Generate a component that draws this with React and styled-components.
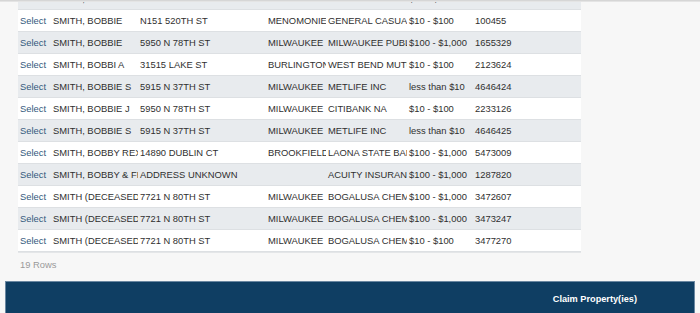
import React from "react";
import styled, { createGlobalStyle } from "styled-components";

const GlobalStyle = createGlobalStyle`
  html, body {
    margin: 0;
    padding: 0;
    background: #f7f7f7;
    font-family: "Liberation Sans", Arial, Helvetica, sans-serif;
  }
  * { box-sizing: border-box; }
`;

const Page = styled.div`
  width: 700px;
  height: 313px;
  overflow: hidden;
  background: #f7f7f7;
`;

const TopRule = styled.div`
  height: 2px;
  background: #d6d6d6;
  border-bottom: 1px solid #e4e4e4;
`;

const Content = styled.div`
  padding-left: 18px;
`;

const Viewport = styled.div`
  width: 563px;
  overflow: hidden;
  border-bottom: 1px solid #e4e6e8;
`;

const Table = styled.div`
  margin-top: -14px;
  display: flex;
  flex-direction: column;
`;

const Row = styled.div`
  display: grid;
  grid-template-columns: 33px 87px 128px 60px 81px 66px 108px;
  height: 22px;
  border-bottom: 1px solid #dde0e3;
  background: ${(p) => (p.$shaded ? "#e8ebee" : "#ffffff")};
`;

const Cell = styled.div`
  overflow: hidden;
  white-space: nowrap;
  text-overflow: clip;
  padding-left: 2px;
  font-size: 9.4px;
  line-height: 21px;
  color: #2f2f2f;
`;

const SelectLink = styled.a`
  color: #34597c;
  text-decoration: none;
  cursor: pointer;
`;

const RowCount = styled.div`
  padding: 6px 0 0 2px;
  height: 28px;
  font-size: 9.4px;
  line-height: 11px;
  color: #9a9a9a;
`;

const ActionBar = styled.div`
  margin: 0 5px;
  height: 34px;
  background: #0f3e63;
  border: 1px solid #6a87a1;
  border-bottom: none;
  display: flex;
  align-items: center;
  justify-content: flex-end;
`;

const ClaimButton = styled.button`
  background: transparent;
  border: none;
  padding: 0;
  margin-right: 57px;
  color: #ffffff;
  font-family: "Liberation Sans", Arial, Helvetica, sans-serif;
  font-weight: bold;
  font-size: 9.2px;
  line-height: 12px;
  cursor: pointer;
`;

const rows = [
  ["SMITH, BOBBIE", "5950 N 78TH ST", "MILWAUKEE", "METLIFE INC", "$10 - $100", "4646423"],
  ["SMITH, BOBBIE", "N151 520TH ST", "MENOMONIE", "GENERAL CASUALTY", "$10 - $100", "100455"],
  ["SMITH, BOBBIE", "5950 N 78TH ST", "MILWAUKEE", "MILWAUKEE PUBLIC", "$100 - $1,000", "1655329"],
  ["SMITH, BOBBI A", "31515 LAKE ST", "BURLINGTON", "WEST BEND MUTUAL", "$10 - $100", "2123624"],
  ["SMITH, BOBBIE S", "5915 N 37TH ST", "MILWAUKEE", "METLIFE INC", "less than $10", "4646424"],
  ["SMITH, BOBBIE J", "5950 N 78TH ST", "MILWAUKEE", "CITIBANK NA", "$10 - $100", "2233126"],
  ["SMITH, BOBBIE S", "5915 N 37TH ST", "MILWAUKEE", "METLIFE INC", "less than $10", "4646425"],
  ["SMITH, BOBBY REX", "14890 DUBLIN CT", "BROOKFIELD", "LAONA STATE BANK", "$100 - $1,000", "5473009"],
  ["SMITH, BOBBY & FRANCES", "ADDRESS UNKNOWN", "", "ACUITY INSURANCE", "$100 - $1,000", "1287820"],
  ["SMITH (DECEASED), BOBBY", "7721 N 80TH ST", "MILWAUKEE", "BOGALUSA CHEMICAL", "$100 - $1,000", "3472607"],
  ["SMITH (DECEASED), BOBBY", "7721 N 80TH ST", "MILWAUKEE", "BOGALUSA CHEMICAL", "$100 - $1,000", "3473247"],
  ["SMITH (DECEASED), BOBBY", "7721 N 80TH ST", "MILWAUKEE", "BOGALUSA CHEMICAL", "$10 - $100", "3477270"],
];

export default function App() {
  return (
    <Page>
      <GlobalStyle />
      <TopRule />
      <Content>
        <Viewport>
          <Table>
            {rows.map((r, i) => (
              <Row key={i} $shaded={i % 2 === 0}>
                <Cell>
                  <SelectLink>Select</SelectLink>
                </Cell>
                {r.map((v, j) => (
                  <Cell key={j}>{v}</Cell>
                ))}
              </Row>
            ))}
          </Table>
        </Viewport>
        <RowCount>19 Rows</RowCount>
      </Content>
      <ActionBar>
        <ClaimButton>Claim Property(ies)</ClaimButton>
      </ActionBar>
    </Page>
  );
}
